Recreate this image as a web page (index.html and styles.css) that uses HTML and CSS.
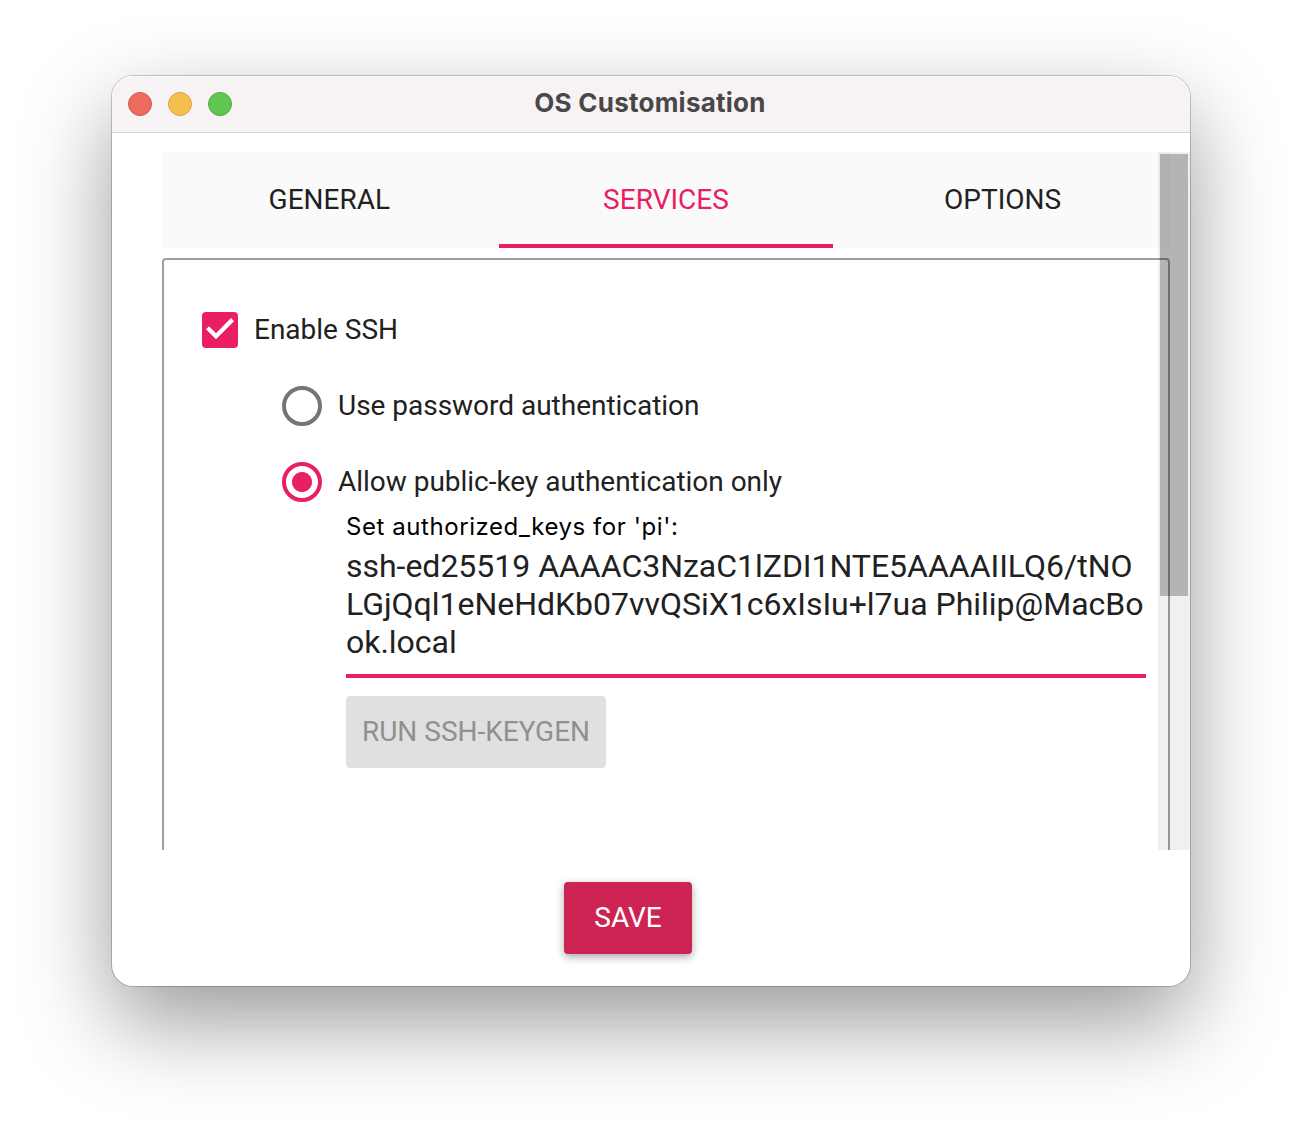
FILE: index.html
```html
<!DOCTYPE html>
<html lang="en">
<head>
<meta charset="utf-8">
<title>OS Customisation</title>
<link rel="stylesheet" href="styles.css">
</head>
<body>
<main class="window">
  <header class="titlebar">
    <div class="lights">
      <span class="light light-close"></span>
      <span class="light light-minimise"></span>
      <span class="light light-zoom"></span>
    </div>
    <h1 class="title">OS Customisation</h1>
  </header>
  <div class="viewport">
    <nav class="tabs">
      <div class="tab">GENERAL</div>
      <div class="tab tab-active">SERVICES</div>
      <div class="tab">OPTIONS</div>
    </nav>
    <section class="panel">
      <div class="option">
        <svg class="checkbox" viewBox="0 0 36 36"><rect width="36" height="36" rx="4" fill="#e91e63"/><path d="M4 17.3 14 27.3 32 9.2 29 6.1 14 21.3 7 14.3Z" fill="#fff"/></svg>
        <span>Enable SSH</span>
      </div>
      <div class="auth">
        <div class="option">
          <span class="radio"></span>
          <span>Use password authentication</span>
        </div>
        <div class="option">
          <span class="radio radio-on"></span>
          <span>Allow public-key authentication only</span>
        </div>
      </div>
      <div class="keys">
        <div class="keys-label">Set authorized_keys for 'pi':</div>
        <div class="keys-field">
          <div>ssh-ed25519 AAAAC3NzaC1lZDI1NTE5AAAAIILQ6/tNO</div>
          <div>LGjQql1eNeHdKb07vvQSiX1c6xIsIu+l7ua Philip@MacBo</div>
          <div>ok.local</div>
        </div>
        <div class="button button-disabled">RUN SSH-KEYGEN</div>
      </div>
    </section>
    <div class="scrollbar"><div class="thumb"></div></div>
  </div>
  <footer class="footer">
    <div class="button button-save">SAVE</div>
  </footer>
</main>
</body>
</html>
```
FILE: styles.css
```css
* { box-sizing: border-box; }

body {
  margin: 0;
  padding: 76px 112px 148px;
  background: #fff;
  color: #212121;
  font: 28px/40px Roboto, sans-serif;
  white-space: nowrap;
}

.window {
  display: flex;
  flex-direction: column;
  height: 910px;
  border-radius: 21px;
  background: #fff;
  box-shadow: 0 0 0 1px rgba(0, 0, 0, .2), 0 36px 90px rgba(0, 0, 0, .4);
}

.titlebar {
  display: grid;
  grid-template-columns: 1fr auto 1fr;
  align-items: center;
  height: 57px;
  padding: 0 16px;
  border-radius: 21px 21px 0 0;
  border-bottom: 1px solid #d6d4d5;
  background: #f7f3f4;
  box-shadow: inset 0 1px #fdfcfc;
}

.lights { display: flex; gap: 16px; }

.light {
  width: 24px;
  height: 24px;
  border: 1px solid;
  border-radius: 50%;
}

.light-close { background: #ed6a5e; border-color: #d35549; }
.light-minimise { background: #f5bf4f; border-color: #d8a13d; }
.light-zoom { background: #61c554; border-color: #51a73e; }

.title {
  margin: 0 2px 2px 0;
  color: #4a4748;
  font: 700 26px/32px Inter, sans-serif;
  letter-spacing: .24px;
}

.viewport {
  position: relative;
  height: 698px;
  margin-top: 19px;
  padding: 0 20px 0 50px;
  overflow: hidden;
}

.tabs {
  display: grid;
  grid-template-columns: repeat(3, 1fr);
  gap: 2px;
  height: 96px;
  background: #fafafa;
}

.tab { padding-top: 28px; text-align: center; }

.tab-active {
  border-bottom: 4px solid #e91e63;
  color: #e91e63;
}

.panel {
  height: 800px;
  margin-top: 10px;
  padding: 50px 22px 0 38px;
  border: 2px solid #9e9e9e;
  border-radius: 4px;
}

.option {
  display: flex;
  align-items: center;
  gap: 16px;
  height: 40px;
  letter-spacing: -.02px;
}

.checkbox { width: 36px; height: 36px; }

.auth {
  display: grid;
  gap: 36px;
  margin: 36px 0 0 80px;
}

.radio {
  width: 40px;
  height: 40px;
  border: 4px solid #757575;
  border-radius: 50%;
}

.radio-on {
  border-color: #e91e63;
  background: radial-gradient(circle, #e91e63 9.5px, transparent 10.5px);
}

.keys { margin: 11px 0 0 144px; }

.keys-label {
  color: #000;
  font-family: Inter, sans-serif;
  font-size: 24px;
  line-height: 28px;
  letter-spacing: .57px;
}

.keys-field {
  margin: 6px 0 18px;
  padding-bottom: 13px;
  border-bottom: 4px solid #e91e63;
  font-size: 32px;
  line-height: 38px;
  letter-spacing: -.02px;
}

.button {
  height: 72px;
  border-radius: 4px;
  line-height: 71px;
  text-align: center;
}

.button-disabled { width: 260px; background: #e0e0e0; color: #909090; }

.scrollbar {
  position: absolute;
  top: 0;
  right: 0;
  width: 32px;
  height: 698px;
  padding: 2px;
  background: rgba(0, 0, 0, .06);
}

.thumb { height: 442px; background: rgba(0, 0, 0, .25); }

.footer { padding: 32px 0 0 452px; }

.button-save {
  width: 128px;
  background: #cd2453;
  color: #fff;
  box-shadow: 0 3px 8px rgba(0, 0, 0, .34);
}
```
